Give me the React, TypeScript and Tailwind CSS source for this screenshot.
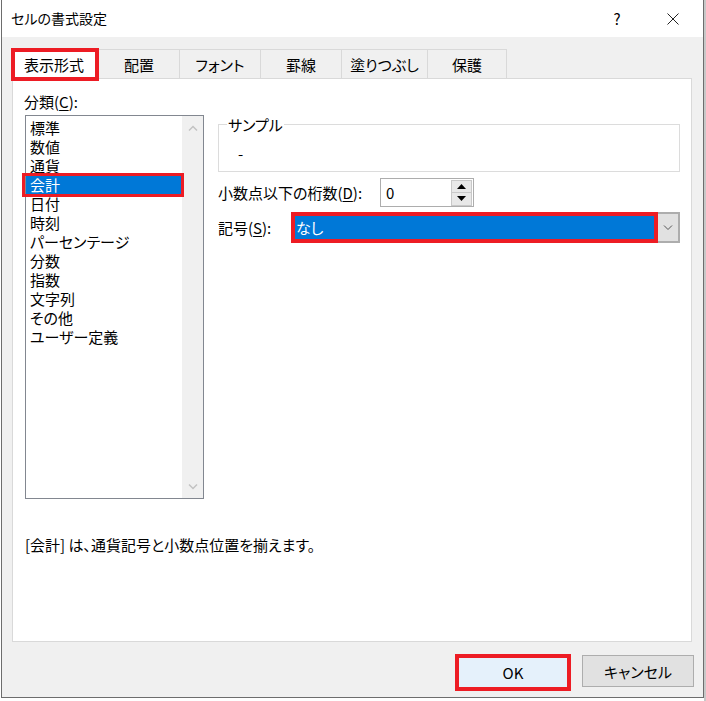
import React from "react";

const TABS = [
  { label: "配置", w: "w-[81px]" },
  { label: "フォント", w: "w-[81px]" },
  { label: "罫線", w: "w-[81px]" },
  { label: "塗りつぶし", w: "w-[86px]" },
  { label: "保護", w: "w-[79px]" },
];

const CATEGORIES = [
  "標準",
  "数値",
  "通貨",
  "会計",
  "日付",
  "時刻",
  "パーセンテージ",
  "分数",
  "指数",
  "文字列",
  "その他",
  "ユーザー定義",
];

function Chevron({ up }: { up?: boolean }) {
  return (
    <svg width="10" height="6" viewBox="0 0 10 6">
      <path
        d={up ? "M1 5.5 L5 1.5 L9 5.5" : "M1 0.5 L5 4.5 L9 0.5"}
        fill="none"
        stroke="#c2c2c2"
        strokeWidth="1.4"
      />
    </svg>
  );
}

export default function App() {
  return (
    <div className="w-[706px] h-[701px] overflow-hidden bg-white text-black text-[15px] font-['Noto_Sans_CJK_JP',sans-serif] [font-feature-settings:'palt'] flex">
      <div className="ml-px w-[703px] h-[698px] border-x border-b border-[#6d6d6d] bg-[#f0f0f0] flex flex-col shrink-0">
        {/* title bar */}
        <div className="h-[37px] bg-white flex items-center pl-[9px] pr-[2px]">
          <span className="text-[14px] leading-[19px]">セルの書式設定</span>
          <div className="ml-auto w-[56px] h-full flex items-center justify-center leading-[19px]">?</div>
          <div className="w-[56px] h-full flex items-center justify-center">
            <svg width="12" height="12" viewBox="0 0 12 12">
              <path d="M0.5 0.5 L11.5 11.5 M11.5 0.5 L0.5 11.5" stroke="#222" strokeWidth="1" />
            </svg>
          </div>
        </div>

        {/* tabs */}
        <div className="h-[41px] flex items-end pl-[9px]">
          <div className="relative z-10 w-[88px] h-[33px] -mb-[3px] bg-white border-[4px] border-[#ed1c24] flex items-center pl-[9px] leading-[19px]">
            表示形式
          </div>
          {TABS.map((t) => (
            <div
              key={t.label}
              className={`${t.w} h-[29px] border-t border-r border-[#d9d9d9] flex items-center justify-center leading-[19px]`}
            >
              {t.label}
            </div>
          ))}
        </div>

        {/* panel */}
        <div className="ml-[10px] w-[680px] h-[564px] bg-white border border-[#d9d9d9] flex flex-col pl-[12px]">
          <div className="flex">
            <div className="w-[179px] flex flex-col">
              <div className="mt-[13px] -ml-px h-[19px] leading-[19px]">
                分類(<span className="underline underline-offset-2">C</span>):
              </div>
              <div className="mt-[4px] h-[384px] border border-[#828790] flex">
                <div className="flex-1 pt-[3px]">
                  {CATEGORIES.map((c) =>
                    c === "会計" ? (
                      <div key={c} className="relative h-[19px] leading-[18px] pl-[4px] bg-[#0078d7] text-white">
                        {c}
                        <div className="absolute -left-[4px] -right-[2px] -top-[3px] -bottom-[2px] border-[3px] border-[#ed1c24]" />
                      </div>
                    ) : (
                      <div key={c} className="h-[19px] leading-[18px] pl-[4px] whitespace-nowrap">
                        {c}
                      </div>
                    )
                  )}
                </div>
                <div className="w-[21px] bg-[#f0f0f0] flex flex-col justify-between">
                  <div className="h-[23px] flex items-center justify-center">
                    <Chevron up />
                  </div>
                  <div className="h-[23px] flex items-center justify-center">
                    <Chevron />
                  </div>
                </div>
              </div>
            </div>

            <div className="ml-[14px] w-[462px] flex flex-col">
              {/* sample group */}
              <div className="relative mt-[45px] h-[48px] border border-[#dcdcdc] pl-[19px] pt-[19px]">
                <div className="absolute left-[8px] -top-[10px] bg-white px-px leading-[19px]">サンプル</div>
                <div className="leading-[19px]">-</div>
              </div>

              {/* decimal places */}
              <div className="mt-[6px] h-[29px] flex items-center">
                <div className="w-[162px] leading-[19px]">
                  小数点以下の桁数(<span className="underline underline-offset-2">D</span>):
                </div>
                <div className="w-[94px] h-[29px] border border-[#adadad] bg-white flex items-center">
                  <span className="pl-[5px] leading-[19px] flex-1">0</span>
                  <div className="w-[21px] h-[26px] mr-px flex flex-col border border-[#c8c8c8]">
                    <div className="flex-1 bg-[#e8e8e8] border-b border-[#c8c8c8] flex items-center justify-center">
                      <svg width="9" height="5" viewBox="0 0 9 5">
                        <path d="M0 5 L4.5 0 L9 5 Z" fill="#000" />
                      </svg>
                    </div>
                    <div className="flex-1 bg-[#e8e8e8] flex items-center justify-center">
                      <svg width="9" height="5" viewBox="0 0 9 5">
                        <path d="M0 0 L4.5 5 L9 0 Z" fill="#000" />
                      </svg>
                    </div>
                  </div>
                </div>
              </div>

              {/* symbol */}
              <div className="mt-[5px] h-[31px] flex items-center">
                <div className="w-[73px] leading-[19px]">
                  記号(<span className="underline underline-offset-2">S</span>):
                </div>
                <div className="w-[389px] h-[31px] flex">
                  <div className="flex-1 h-full border-[4px] border-[#ed1c24] bg-white">
                    <div className="h-full bg-[#0078d7] text-white pl-px leading-[23px]">なし</div>
                  </div>
                  <div className="w-[22px] h-full bg-[#e1e1e1] border-2 border-l-0 border-[#adadad] flex items-center justify-center">
                    <svg width="10" height="6" viewBox="0 0 10 6">
                      <path d="M1 0.5 L5 4.5 L9 0.5" fill="none" stroke="#555" strokeWidth="1" />
                    </svg>
                  </div>
                </div>
              </div>
            </div>
          </div>

          <div className="mt-[36px] leading-[19px]">[会計] は、通貨記号と小数点位置を揃えます。</div>
        </div>

        {/* buttons */}
        <div className="mt-[12px] flex justify-end items-start gap-[11px] pr-[9px]">
          <div className="w-[116px] h-[37px] border-[4px] border-[#ed1c24] bg-[#e5f1fb] flex items-center justify-center leading-[19px]">
            OK
          </div>
          <div className="mt-px w-[112px] h-[32px] bg-[#e1e1e1] border border-[#adadad] flex items-center justify-center leading-[19px]">
            キャンセル
          </div>
        </div>
      </div>
      <div className="flex-1 h-full bg-[#c8c8c8]" />
    </div>
  );
}
